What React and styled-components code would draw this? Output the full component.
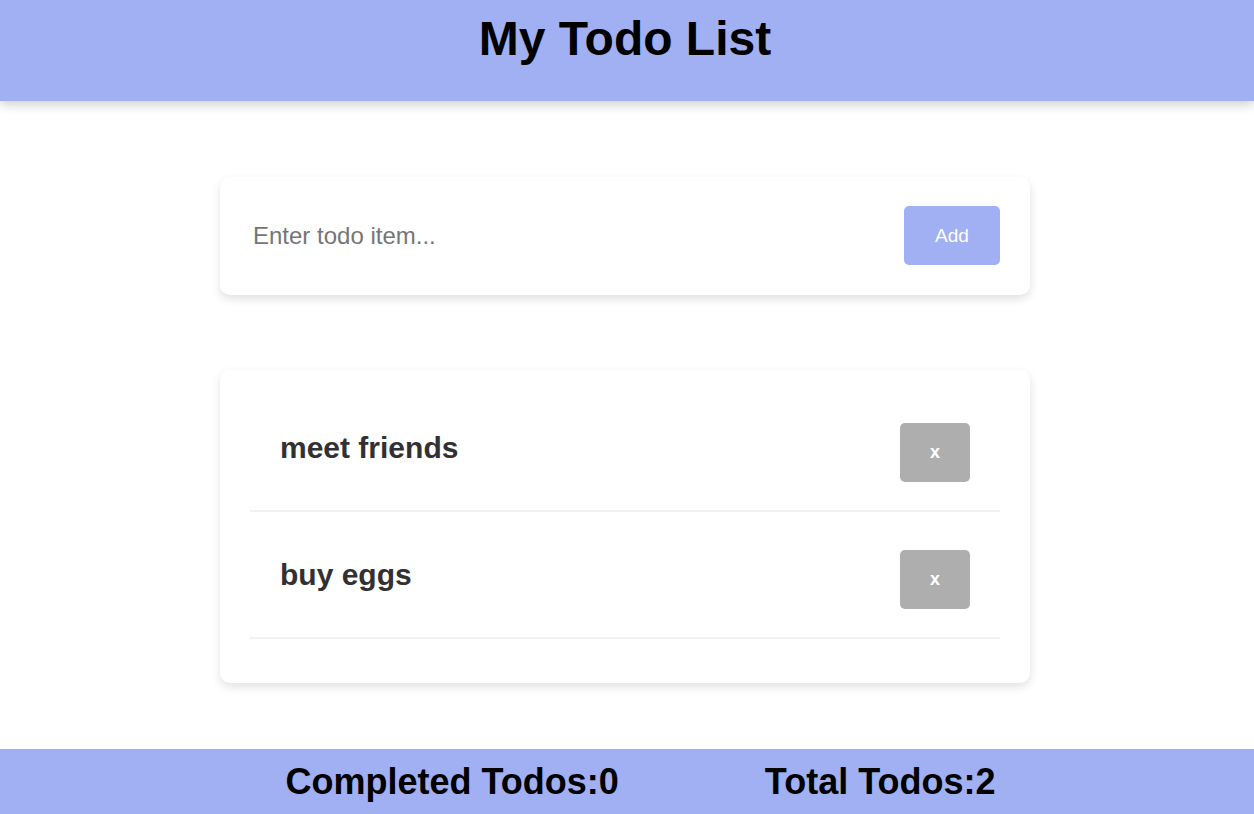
import React, { useState } from "react";
import styled, { createGlobalStyle } from "styled-components";

const GlobalStyle = createGlobalStyle`
  html, body {
    margin: 0;
    padding: 0;
    background: #ffffff;
    font-family: "Liberation Sans", Arial, Helvetica, sans-serif;
  }
  * { box-sizing: border-box; }
`;

const Page = styled.div`
  min-height: 100vh;
  display: flex;
  flex-direction: column;
`;

const Header = styled.header`
  height: 101px;
  padding: 11px 4px 0 0;
  background: #a0b0f2;
  box-shadow: 0 4px 10px rgba(0, 0, 0, 0.18);
  text-align: center;
  position: relative;
  z-index: 1;
`;

const Title = styled.h1`
  margin: 0;
  font-size: 48px;
  font-weight: 700;
  line-height: normal;
  color: #000;
`;

const Main = styled.main`
  display: flex;
  flex-direction: column;
  align-items: center;
  gap: 75px;
  padding: 76px 4px 66px 0;
`;

const Card = styled.section`
  width: 810px;
  background: #fff;
  border-radius: 10px;
  box-shadow: 0 4px 10px rgba(0, 0, 0, 0.12);
  padding: ${(p) => p.$pad};
`;

const Form = styled.form`
  display: flex;
  align-items: center;
  gap: 20px;
`;

const Input = styled.input`
  flex: 1;
  border: none;
  outline: none;
  padding: 0 0 0 3px;
  font-family: "Liberation Sans", Arial, sans-serif;
  font-size: 24px;
  color: #333;
  background: transparent;
  &::placeholder {
    color: #757575;
  }
`;

const Button = styled.button`
  width: ${(p) => p.$w}px;
  height: 59px;
  border: none;
  border-radius: 5px;
  background: ${(p) => p.$bg};
  color: #fff;
  font-family: "Liberation Sans", Arial, sans-serif;
  font-size: ${(p) => p.$fs}px;
  font-weight: ${(p) => p.$fw};
  cursor: pointer;
  flex-shrink: 0;
`;

const List = styled.ul`
  list-style: none;
  margin: 0;
  padding: 0;
`;

const Row = styled.li`
  display: flex;
  align-items: center;
  justify-content: space-between;
  padding: 38px 30px 28px;
  border-bottom: 2px solid #f1f1f1;
`;

const ItemText = styled.span`
  font-size: 30px;
  font-weight: 700;
  color: #333033;
  padding-bottom: 10px;
`;

const Footer = styled.footer`
  margin-top: auto;
  height: 65px;
  padding: 12px 0 0 27px;
  background: #a0b0f2;
  display: flex;
  justify-content: center;
  gap: 146px;
`;

const Stat = styled.span`
  font-size: 36px;
  font-weight: 700;
  color: #000;
  line-height: normal;
`;

export default function App() {
  const [todos] = useState([
    { id: 1, text: "meet friends", done: false },
    { id: 2, text: "buy eggs", done: false },
  ]);
  const [value, setValue] = useState("");

  return (
    <Page>
      <GlobalStyle />
      <Header>
        <Title>My Todo List</Title>
      </Header>
      <Main>
        <Card $pad="29px 30px 30px 30px">
          <Form onSubmit={(e) => e.preventDefault()}>
            <Input
              placeholder="Enter todo item..."
              value={value}
              onChange={(e) => setValue(e.target.value)}
            />
            <Button type="submit" $w={96} $bg="#a0b0f2" $fs={19} $fw={400}>
              Add
            </Button>
          </Form>
        </Card>
        <Card $pad="15px 30px 44px 30px">
          <List>
            {todos.map((t) => (
              <Row key={t.id}>
                <ItemText>{t.text}</ItemText>
                <Button type="button" $w={70} $bg="#aeaeae" $fs={18} $fw={700}>
                  x
                </Button>
              </Row>
            ))}
          </List>
        </Card>
      </Main>
      <Footer>
        <Stat>Completed Todos:{todos.filter((t) => t.done).length}</Stat>
        <Stat>Total Todos:{todos.length}</Stat>
      </Footer>
    </Page>
  );
}
